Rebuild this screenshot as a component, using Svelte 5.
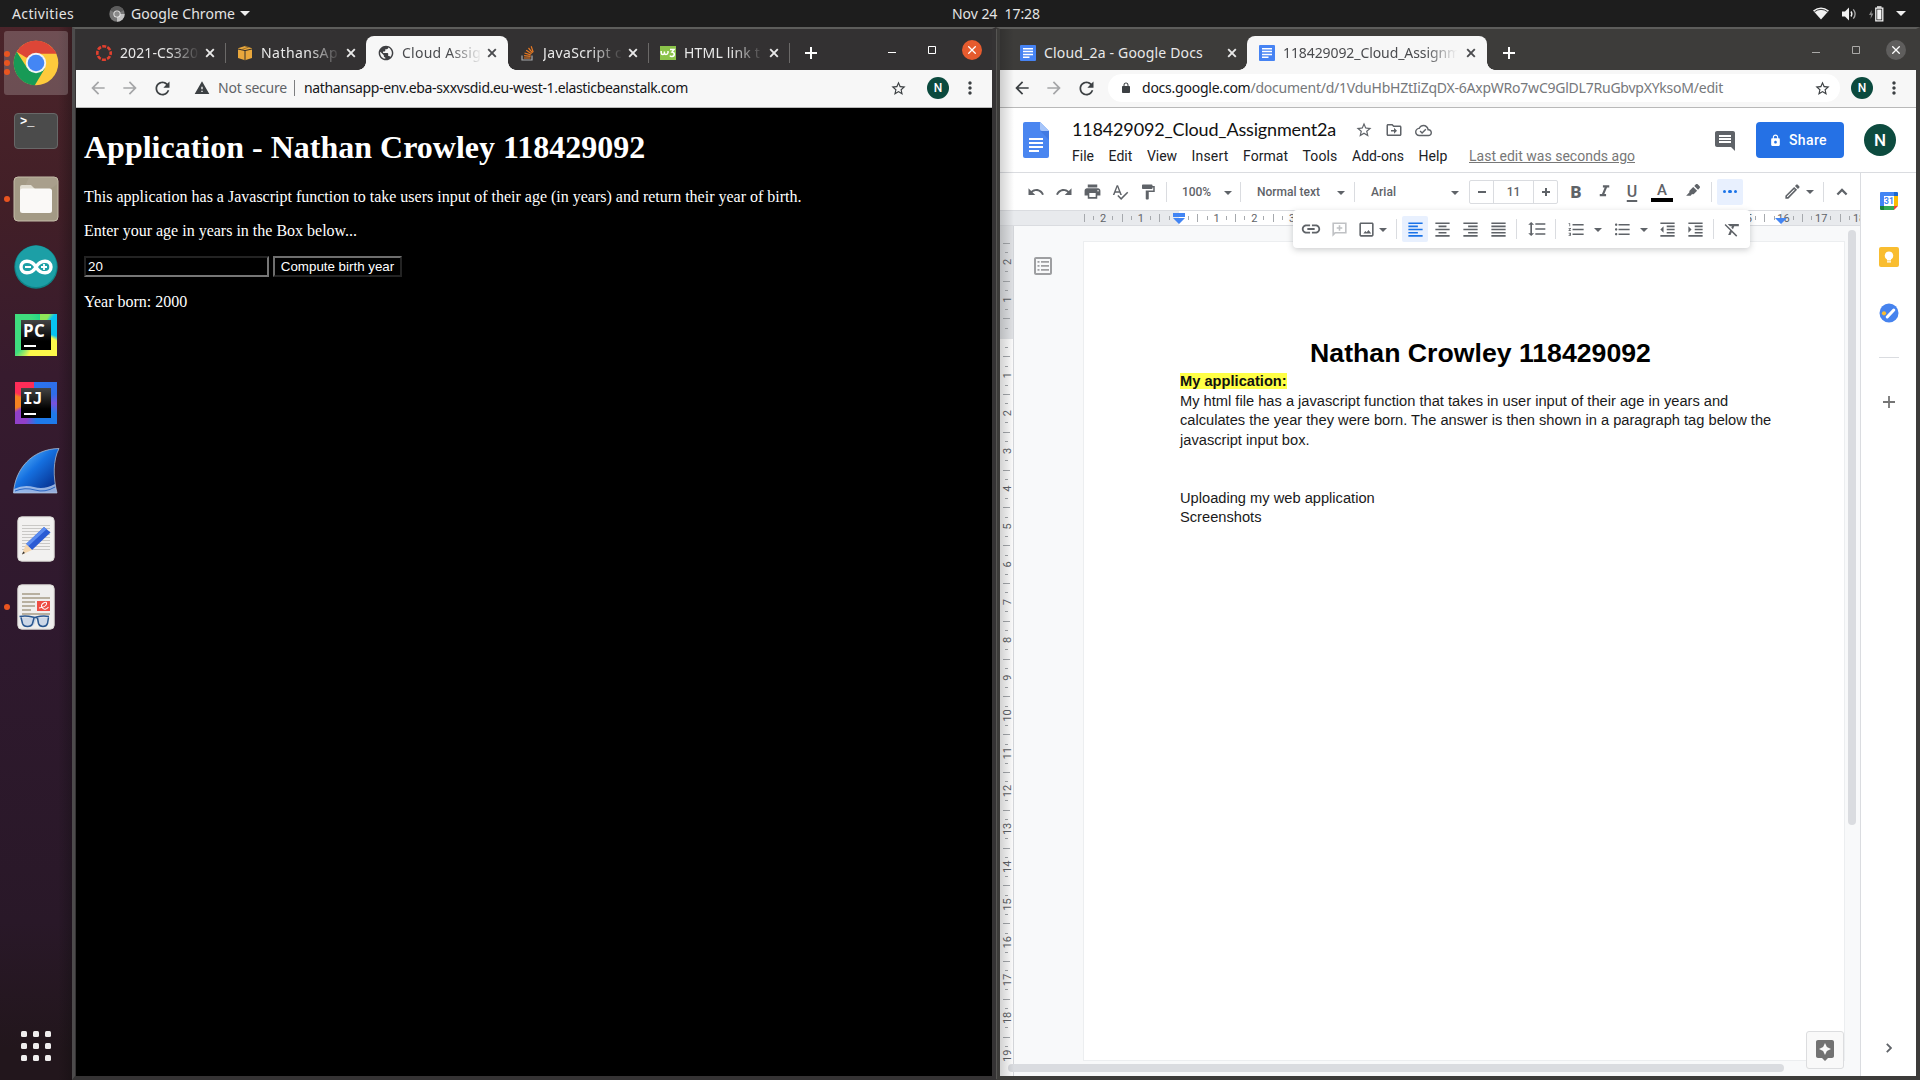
<script>
  const p = {
    back: 'M20 11H7.83l5.59-5.59L12 4l-8 8 8 8 1.41-1.41L7.83 13H20v-2z',
    forward: 'M12 4l-1.41 1.41L16.17 11H4v2h12.17l-5.58 5.59L12 20l8-8z',
    reload: 'M17.65 6.35C16.2 4.9 14.21 4 12 4c-4.42 0-7.99 3.58-7.99 8s3.57 8 7.99 8c3.73 0 6.84-2.55 7.73-6h-2.08c-.82 2.33-3.04 4-5.65 4-3.31 0-6-2.69-6-6s2.69-6 6-6c1.66 0 3.14.69 4.22 1.78L13 11h7V4l-2.35 2.35z',
    warning: 'M1 21h22L12 2 1 21zm12-3h-2v-2h2v2zm0-4h-2v-4h2v4z',
    lock: 'M18 8h-1V6c0-2.76-2.24-5-5-5S7 3.24 7 6v2H6c-1.1 0-2 .9-2 2v10c0 1.1.9 2 2 2h12c1.1 0 2-.9 2-2V10c0-1.1-.9-2-2-2zm-9-2c0-1.66 1.34-3 3-3s3 1.34 3 3v2H9V6z',
    lockHole: 'M18 8h-1V6c0-2.76-2.24-5-5-5S7 3.24 7 6v2H6c-1.1 0-2 .9-2 2v10c0 1.1.9 2 2 2h12c1.1 0 2-.9 2-2V10c0-1.1-.9-2-2-2zm-6 9.5c-1.4 0-2.5-1.1-2.5-2.5s1.1-2.5 2.5-2.5 2.5 1.1 2.5 2.5-1.1 2.5-2.5 2.5zM9 8V6c0-1.66 1.34-3 3-3s3 1.34 3 3v2H9z',
    star: 'M22 9.24l-7.19-.62L12 2 9.19 8.63 2 9.24l5.46 4.73L5.82 21 12 17.27 18.18 21l-1.63-7.03L22 9.24zM12 15.4l-3.76 2.27 1-4.28-3.32-2.88 4.38-.38L12 6.1l1.71 4.04 4.38.38-3.32 2.88 1 4.28L12 15.4z',
    globe: 'M12 2C6.48 2 2 6.48 2 12s4.48 10 10 10 10-4.48 10-10S17.52 2 12 2zm-1 17.93c-3.95-.49-7-3.85-7-7.93 0-.62.08-1.21.21-1.79L9 15v1c0 1.1.9 2 2 2v1.93zm6.9-2.54c-.26-.81-1-1.39-1.9-1.39h-1v-3c0-.55-.45-1-1-1H8v-2h2c.55 0 1-.45 1-1V7h2c1.1 0 2-.9 2-2v-.41c2.93 1.19 5 4.06 5 7.41 0 2.08-.8 3.97-2.1 5.39z',
    move: 'M20 6h-8l-2-2H4c-1.1 0-2 .9-2 2v12c0 1.1.9 2 2 2h16c1.1 0 2-.9 2-2V8c0-1.1-.9-2-2-2zm0 12H4V6h5.17l2 2H20v10zm-8-1l4-4-4-4v3H8v2h4z',
    cloud: 'M19.35 10.04C18.67 6.59 15.64 4 12 4 9.11 4 6.6 5.64 5.35 8.04 2.34 8.36 0 10.91 0 14c0 3.31 2.69 6 6 6h13c2.76 0 5-2.24 5-5 0-2.64-2.05-4.78-4.65-4.96zM19 18H6c-2.21 0-4-1.79-4-4 0-2.05 1.53-3.76 3.56-3.97l1.07-.11.5-.95C8.08 7.14 9.94 6 12 6c2.62 0 4.88 1.86 5.39 4.43l.3 1.5 1.53.11c1.56.1 2.78 1.41 2.78 2.96 0 1.65-1.35 3-3 3zm-9-3.82l-2.09-2.09L6.5 13.5 10 17l6.01-6.01-1.41-1.41z',
    comment: 'M21.99 4c0-1.1-.89-2-1.99-2H4c-1.1 0-2 .9-2 2v12c0 1.1.9 2 2 2h14l4 4-.01-18zM18 14H6v-2h12v2zm0-3H6V9h12v2zm0-3H6V6h12v2z',
    undo: 'M12.5 8c-2.65 0-5.05.99-6.9 2.6L2 7v9h9l-3.62-3.62c1.39-1.16 3.16-1.88 5.12-1.88 3.54 0 6.55 2.31 7.6 5.5l2.37-.78C21.08 11.03 17.15 8 12.5 8z',
    redo: 'M18.4 10.6C16.55 8.99 14.15 8 11.5 8c-4.65 0-8.58 3.03-9.96 7.22L3.9 16c1.05-3.19 4.05-5.5 7.6-5.5 1.95 0 3.73.72 5.12 1.88L13 16h9V7l-3.6 3.6z',
    print: 'M19 8H5c-1.66 0-3 1.34-3 3v6h4v4h12v-4h4v-6c0-1.66-1.34-3-3-3zm-3 11H8v-5h8v5zm3-7c-.55 0-1-.45-1-1s.45-1 1-1 1 .45 1 1-.45 1-1 1zm-1-9H6v4h12V3z',
    spell: 'M12.45 16h2.09L9.43 3H7.57L2.46 16h2.09l1.12-3h5.64l1.14 3zm-6.02-5L8.5 5.48 10.57 11H6.43zm15.16.59l-8.09 8.09L9.83 16l-1.41 1.41 5.09 5.09L23 13l-1.41-1.41z',
    paint: 'M18 4V3c0-.55-.45-1-1-1H5c-.55 0-1 .45-1 1v4c0 .55.45 1 1 1h12c.55 0 1-.45 1-1V6h1v4H9v11c0 .55.45 1 1 1h2c.55 0 1-.45 1-1v-9h8V4h-3z',
    italic: 'M10 4v3h2.21l-3.42 8H6v3h8v-3h-2.21l3.42-8H18V4z',
    marker: 'M13 5.5l5.5 5.5-4.2 4.2c-.8.8-2 .9-2.9.4L9.3 18H3l4.7-4.8c-.4-.9-.3-1.9.4-2.6zM14.5 4.2l2.3-2.3c.7-.7 1.8-.7 2.5 0l2.8 2.8c.7.7.7 1.8 0 2.5l-2.3 2.3z',
    pencil: 'M14.06 9.02l.92.92L5.92 19H5v-.92l9.06-9.06M17.66 3c-.25 0-.51.1-.7.29l-1.83 1.83 3.75 3.75 1.83-1.83c.39-.39.39-1.02 0-1.41l-2.34-2.34c-.2-.2-.45-.29-.71-.29zm-3.6 3.19L3 17.25V21h3.75L17.81 9.94l-3.75-3.75z',
    up: 'M7.41 16L12 11.42 16.59 16 18.5 14.1 12 7.6 5.5 14.1z',
    link: 'M3.9 12c0-1.71 1.39-3.1 3.1-3.1h4V7H7c-2.76 0-5 2.24-5 5s2.24 5 5 5h4v-1.9H7c-1.71 0-3.1-1.39-3.1-3.1zM8 13h8v-2H8v2zm9-6h-4v1.9h4c1.71 0 3.1 1.39 3.1 3.1s-1.39 3.1-3.1 3.1h-4V17h4c2.76 0 5-2.24 5-5s-2.24-5-5-5z',
    addComment: 'M3 3h18v14H7l-4 4zM5 5v11.2L6.2 15H19V5zM11 6.5h2V9h2.5v2H13v2.5h-2V11H8.5V9H11z',
    image: 'M19 5v14H5V5h14m0-2H5c-1.1 0-2 .9-2 2v14c0 1.1.9 2 2 2h14c1.1 0 2-.9 2-2V5c0-1.1-.9-2-2-2zM14.5 12.5l-2.2 2.9L10.5 14 8 17h10z',
    left: 'M15 15H3v2h12v-2zm0-8H3v2h12V7zM3 13h18v-2H3v2zm0 8h18v-2H3v2zM3 3v2h18V3H3z',
    center: 'M7 15v2h10v-2H7zm-4 6h18v-2H3v2zm0-8h18v-2H3v2zm4-6v2h10V7H7zM3 3v2h18V3H3z',
    right: 'M3 21h18v-2H3v2zm6-4h12v-2H9v2zm-6-4h18v-2H3v2zm6-4h12V7H9v2zM3 3v2h18V3H3z',
    justify: 'M3 21h18v-2H3v2zm0-4h18v-2H3v2zm0-4h18v-2H3v2zm0-4h18V7H3v2zm0-6v2h18V3H3z',
    spacing: 'M6 7h2.5L5 3.5 1.5 7H4v10H1.5L5 20.5 8.5 17H6V7zm4-2v2h12V5H10zm0 14h12v-2H10v2zm0-6h12v-2H10v2z',
    numbers: 'M2 17h2v.5H3v1h1v.5H2v1h3v-4H2v1zm1-9h1V4H2v1h1v3zm-1 3h1.8L2 13.1v.9h3v-1H3.2L5 10.9V10H2v1zm5-6v2h14V5H7zm0 14h14v-2H7v2zm0-6h14v-2H7v2z',
    bullets: 'M4 10.5c-.83 0-1.5.67-1.5 1.5s.67 1.5 1.5 1.5 1.5-.67 1.5-1.5-.67-1.5-1.5-1.5zm0-6c-.83 0-1.5.67-1.5 1.5S3.17 7.5 4 7.5 5.5 6.83 5.5 6 4.83 4.5 4 4.5zm0 12c-.83 0-1.5.68-1.5 1.5s.68 1.5 1.5 1.5 1.5-.68 1.5-1.5-.67-1.5-1.5-1.5zM7 19h14v-2H7v2zm0-6h14v-2H7v2zm0-8v2h14V5H7z',
    outdent: 'M11 17h10v-2H11v2zm-8-5l4 4V8l-4 4zm0 9h18v-2H3v2zM3 3v2h18V3H3zm8 6h10V7H11v2zm0 4h10v-2H11v2z',
    indent: 'M3 21h18v-2H3v2zM3 8v8l4-4-4-4zm8 9h10v-2H11v2zM3 3v2h18V3H3zm8 6h10V7H11v2zm0 4h10v-2H11v2z',
    clear: 'M3.27 5L2 6.27l6.97 6.97L6.5 19h3l1.57-3.66L16.73 21 18 19.73 3.55 5.27 3.27 5zM6 5v.18L8.82 8h2.4l-.72 1.68 2.1 2.1L14.21 8H20V5H6z',
    assistant: 'M19 2H5c-1.11 0-2 .9-2 2v14c0 1.1.89 2 2 2h4l3 3 3-3h4c1.1 0 2-.9 2-2V4c0-1.1-.9-2-2-2zm-5.12 10.88L12 17l-1.88-4.12L6 11l4.12-1.88L12 5l1.88 4.12L18 11l-4.12 1.88z',
    dots: 'M12 8c1.1 0 2-.9 2-2s-.9-2-2-2-2 .9-2 2 .9 2 2 2zm0 2c-1.1 0-2 .9-2 2s.9 2 2 2 2-.9 2-2-.9-2-2-2zm0 6c-1.1 0-2 .9-2 2s.9 2 2 2 2-.9 2-2-.9-2-2-2z',
    outline: 'M19 3H5c-1.1 0-2 .9-2 2v14c0 1.1.9 2 2 2h14c1.1 0 2-.9 2-2V5c0-1.1-.9-2-2-2zm0 16H5V5h14zM6.5 7h2v1.8h-2zM10 7h8v1.8h-8zM6.5 11h2v1.8h-2zM10 11h8v1.8h-8zM6.5 15h2v1.8h-2zM10 15h8v1.8h-8z'
  };

  const tabs = [
    { title: '2021-CS320', icon: 'canvas', w: 78 },
    { title: 'NathansAp', icon: 'aws', w: 77 },
    { title: 'Cloud Assig', icon: 'globe', w: 79, active: true },
    { title: 'JavaScript c', icon: 'stack', w: 79 },
    { title: 'HTML link t', icon: 'w3', w: 76 }
  ];
  const docTabs = [
    { title: 'Cloud_2a - Google Docs', icon: 'docs', w: 159 },
    { title: '118429092_Cloud_Assignm', icon: 'docs', w: 177, active: true }
  ];
  const menus = [['File', 22], ['Edit', 24], ['View', 30], ['Insert', 37], ['Format', 45], ['Tools', 35], ['Add-ons', 52], ['Help', 29]];
  const dock = ['chrome', 'terminal', 'files', 'arduino', 'pycharm', 'idea', 'wireshark', 'editor', 'viewer'];
  const running = { chrome: 3, files: 1, viewer: 1 };

  const CM = 37.8;
  const range = (a, b) => Array.from({ length: b - a + 1 }, (_, i) => a + i);
  // Quarter-centimetre marks, leaving out the places where a number stands
  const marks = (a, b) => range(a * 4, b * 4).filter((q) => q % 4 !== 0);
  const hMarks = marks(-3, 18).filter((q) => q >= -10);
  const vMarks = marks(-3, 19).filter((q) => q >= -10);

  // Spreads the letters so that a run of text takes exactly w pixels
  function fit(node, w) {
    const now = node.getBoundingClientRect().width;
    node.style.letterSpacing = (w - now) / node.textContent.length + 'px';
  }
</script>

{#snippet ic(name, size = 18)}
  <svg class="ic" width={size} height={size} viewBox="0 0 24 24" fill="currentColor" fill-rule="evenodd"><path d={p[name]} /></svg>
{/snippet}

{#snippet caret()}
  <svg class="ic" width="8" height="4" viewBox="0 0 8 4" fill="currentColor"><path d="M0 0h8L4 4z" /></svg>
{/snippet}

{#snippet favicon(name)}
  <svg class="ic" width="16" height="16" viewBox="0 0 16 16">
    {#if name === 'canvas'}
      <circle cx="8" cy="8" r="6.7" fill="none" stroke="#e2402f" stroke-width="2.6" stroke-dasharray="4 1.262" stroke-dashoffset="2" />
    {:else if name === 'aws'}
      <path d="M1 3.2L8 1l7 2.2v9.8L8 15.2 1 13z" fill="#e9a73c" />
      <path d="M1 4l7 1.6L15 4M8 5.6V15" fill="none" stroke="#35302b" stroke-width="1" />
      <path d="M8 1l3.5 1.2L4.5 4.6" fill="none" stroke="#7a5a25" stroke-width=".7" />
    {:else if name === 'globe'}
      <g transform="scale(.6667)"><path d={p.globe} transform="translate(-1.2 -1.2) scale(1.1)" fill="#3f4043" fill-rule="evenodd" /></g>
    {:else if name === 'stack'}
      <path d="M3 10.5v4.5h10v-4.5" fill="none" stroke="#a7a9ac" stroke-width="1.2" />
      <path d="M5 13h6.5M5.1 10.7l6.5.7M5.5 8l6.2 1.9M7.2 5.3l5.4 3.5M9.5 3l4 4.9M12.2 1.3l2 6" stroke="#e87922" stroke-width="1.2" />
    {:else if name === 'w3'}
      <rect y="1" width="16" height="14" fill="#8bc34a" />
      <path d="M1.2 6v1.700q0 1.800 1.600 1.800T4.400 7.700V6.500M4.400 7.700q0 1.800 1.600 1.800T8 7.700V6M10 4.500h4l-2 2.500q2.300.2 2.300 2.300T12 11.600q-1.500 0-2.200-1" fill="none" stroke="#fff" stroke-width="1.5" />
    {:else}
      <rect width="16" height="16" rx="1" fill="#4683f3" />
      <path d="M3 3.800h10M3 6.600h10M3 9.400h10M3 12.200h6.500" stroke="#fff" stroke-width="1.5" />
    {/if}
  </svg>
{/snippet}

{#snippet strip(list, cls)}
  <div class="strip {cls}">
    {#each list as t}
      <div class="tab" class:active={t.active}>
        {@render favicon(t.icon)}
        <div class="ttl"><span use:fit={t.w}>{t.title}</span></div>
        <svg class="x" width="10" height="10" viewBox="0 0 10 10" stroke="currentColor" stroke-width="1.9"><path d="M1.2 1.2l7.6 7.6M8.8 1.2L1.2 8.8" /></svg>
      </div>
    {/each}
    <svg class="plus" width="12" height="12" viewBox="0 0 12 12" stroke="#fff" stroke-width="2"><path d="M6 0v12M0 6h12" /></svg>
    <div class="controls">
      <svg width="8" height="8" viewBox="0 0 8 8" stroke="currentColor"><path d="M0 6.5h8" /></svg>
      <svg width="8" height="8" viewBox="0 0 8 8" stroke="currentColor" fill="none"><path d="M.5.5h7v7h-7z" /></svg>
      <span class="close"><svg width="8" height="8" viewBox="0 0 8 8" stroke="#fff" stroke-width="1.3"><path d="M.3.3l7.4 7.4M7.7.3L.3 7.7" /></svg></span>
    </div>
  </div>
{/snippet}

<div class="desktop">
  <header class="topbar">
    <span class="activities" use:fit={62}>Activities</span>
    <svg width="16" height="16" viewBox="0 0 16 16"><circle cx="8" cy="8" r="7.7" fill="#777" /><path d="M8 8L1.3 4.2A7.7 7.7 0 0 1 14.7 4.2z" fill="#5c5c5c" /><path d="M8 8h7.7A7.7 7.7 0 0 1 8 15.7z" fill="#c2c2c2" /><circle cx="8" cy="8" r="3.6" fill="#eee" /><circle cx="8" cy="8" r="2.7" fill="#8a8a8a" /></svg>
    <span class="appname" use:fit={104}>Google Chrome</span>
    <svg width="10" height="5" viewBox="0 0 10 5"><path d="M0 0h10L5 5z" fill="#eee" /></svg>
    <span class="clock" use:fit={88}>Nov 24&nbsp; 17:28</span>
    <div class="tray">
      <svg width="16" height="13" viewBox="0 0 16 13"><path d="M8 12.5L0 3.5Q8-2.5 16 3.5z" fill="#f2f2f2" /><path d="M1.5 4.7Q8 0 14.5 4.7" fill="none" stroke="#1d1d1d" stroke-width=".9" /></svg>
      <svg width="15" height="14" viewBox="0 0 15 14"><path d="M0 4.5h3L7 .5v13l-4-4H0z" fill="#f2f2f2" /><path d="M9 4.5q1.7 2.5 0 5" stroke="#f2f2f2" stroke-width="1.4" fill="none" /><path d="M11.3 2.3q3.6 4.7 0 9.4" stroke="#aaa" stroke-width="1.3" fill="none" /></svg>
      <svg width="15" height="16" viewBox="0 0 15 16"><path d="M2.8 4L0 9h2l-.5 4L4.400 7.500H2.500z" fill="#8a8a8a" /><path d="M6.800 2.200h7v12.600h-7z" fill="none" stroke="#f2f2f2" stroke-width="1.3" /><path d="M8 .3h4.500v1.500H8zM8.200 3.600h4.200v9.800H8.200z" fill="#f2f2f2" /></svg>
      <svg width="10" height="5" viewBox="0 0 10 5"><path d="M0 0h10L5 5z" fill="#eee" /></svg>
    </div>
  </header>

  <main class="work">
    <nav class="dock">
      {#each dock as d}
        <div class="slot" class:on={d === 'chrome'}>
          {#if running[d]}
            <div class="pips">{#each range(1, running[d]) as _}<i></i>{/each}</div>
          {/if}
          {#if d === 'chrome'}
            <svg width="46" height="46" viewBox="-23 -23 46 46">
              <circle r="22.3" fill="#fdca3c" />
              <path d="M-19.3-11.2A22.3 22.3 0 0 1 20.3-9.4H0L-9.5-5.2z" fill="#dd4637" />
              <path d="M-19.3-11.2A22.3 22.3 0 0 0-1.2 22.3L9 5.3 0 9-9 4.7z" fill="#179a56" />
              <path d="M0-9.4h20.3L19-12z" fill="#dd4637" />
              <circle r="10.2" fill="#f2f4f5" /><circle r="8.3" fill="#4486f4" />
            </svg>
          {:else if d === 'terminal'}
            <div class="terminal"><span>&gt;_</span></div>
          {:else if d === 'files'}
            <svg width="46" height="46" viewBox="0 0 46 46"><rect x="1" y="1" width="44" height="44" rx="4" fill="#a39a85" stroke="#c5bda9" /><path d="M16 1.5h25q3.5 0 3.5 3.5v3L13 30V8z" fill="#b1a895" opacity=".4" /><path d="M7 11q0-2 2-2h9l4 4h9v8H7z" fill="#e2ded2" /><rect x="7" y="12.5" width="32" height="24.5" rx="2.5" fill="#faf9f7" /></svg>
          {:else if d === 'arduino'}
            <svg width="44" height="44" viewBox="0 0 44 44"><circle cx="22" cy="22" r="21.7" fill="#0e8487" /><circle cx="22" cy="21.3" r="20.7" fill="#1c9fa6" /><path d="M22 22C17.5 14 7 14.5 7 22s10.5 8 15 0c4.5-8 15-7.5 15 0s-10.5 8-15 0z" fill="none" stroke="#fff" stroke-width="3.4" /><path d="M11 22h6M27 22h6M30 19v6" stroke="#fff" stroke-width="1.8" /></svg>
          {:else if d === 'pycharm' || d === 'idea'}
            <div class="ide {d}"><div><span>{d === 'pycharm' ? 'PC' : 'IJ'}</span><i></i></div></div>
          {:else if d === 'wireshark'}
            <svg width="48" height="48" viewBox="0 0 48 48"><defs><linearGradient id="fin" x1="0" y1="0" x2="1" y2="1"><stop offset=".15" stop-color="#58b2fa" /><stop offset=".45" stop-color="#1570e0" /><stop offset=".9" stop-color="#052c8a" /></linearGradient></defs><path d="M1.5 46C3 22 20 2 47 1.5 41 13 41 30 45 46z" fill="url(#fin)" stroke="#a9b7cc" stroke-width=".8" /><path d="M2 42q10-5 20-2t21-3l2 9H1.5z" fill="#b6cdf0" opacity=".8" /><path d="M3 44q10-4 20-1t20-3" stroke="#2a66c4" fill="none" /></svg>
          {:else if d === 'editor'}
            <svg width="38" height="46" viewBox="0 0 38 46"><rect x=".8" y=".8" width="36.4" height="44.4" rx="4" fill="#f2f1f0" stroke="#d4d2cf" /><path d="M5 9.5h28M5 12.5h28M5 15.5h28M5 18.5h28M5 21.5h28M5 24.5h28M5 27.5h28M5 30.5h28M5 33.5h28" stroke="#c9c8c6" /><path d="M27 11l6.5 5.5L15 34l-6-6z" fill="#2a5bd4" /><path d="M27 11l2.5 2.2L11.5 30 9 28z" fill="#5b8cf0" /><path d="M9 28l6 6-10 4.5z" fill="#f4d6ae" /><path d="M6.3 35.5L8 37l-3 1.5z" fill="#333" /></svg>
          {:else}
            <svg width="38" height="46" viewBox="0 0 38 46"><rect x=".8" y=".8" width="36.4" height="44.4" rx="4" fill="#efeeed" stroke="#d4d2cf" /><path d="M5 10h18M5 14h28M5 18h13M5 22h13M5 26h9M5 30h28" stroke="#b8b0a0" stroke-width="1.8" /><rect x="20" y="17" width="13" height="10" fill="#ee4d43" /><path d="M22 24q7-1 7.5-4t-3-1-1 5 6-1" fill="none" stroke="#fff" stroke-width="1.1" /><path d="M3.5 33.5h12l2 1.5h3l2-1.5H32l-1.5 6q-1 3-4.5 3t-4.5-3L19.5 35l-2 5q-1 2.5-5 2.5T6 40z" fill="#b4c8e2" opacity=".6" /><path d="M2.5 32.5q7-1 13 .5t4 0q6-1.500 12.500-.5M4 33.500l1.500 6q1 3 5 3t5-3l1.500-5.500M20.500 34l1 5.500q1 3 4.500 3t4.500-3l1-6" fill="none" stroke="#28568f" stroke-width="1.5" /></svg>
          {/if}
        </div>
      {/each}
      <div class="apps">{#each range(1, 9) as _}<i></i>{/each}</div>
    </nav>

    <section class="win one">
      {@render strip(tabs, 'dark')}
      <div class="bar">
        <span class="nav off">{@render ic('back', 20)}</span>
        <span class="nav off">{@render ic('forward', 20)}</span>
        <span class="nav">{@render ic('reload', 21)}</span>
        <div class="omni">
          {@render ic('warning', 16)}
          <span class="secure" use:fit={69}>Not secure</span>
          <i class="split"></i>
          <span class="host" use:fit={384}>nathansapp-env.eba-sxxvsdid.eu-west-1.elasticbeanstalk.com</span>
          <span class="fav">{@render ic('star', 17)}</span>
        </div>
        <span class="me">N</span>
        <span class="kebab">{@render ic('dots', 20)}</span>
      </div>
      <div class="page">
        <h1>Application - Nathan Crowley 118429092</h1>
        <p>This application has a Javascript function to take users input of their age (in years) and return their year of birth.</p>
        <p>Enter your age in years in the Box below...</p>
        <div class="form"><div class="field">20</div><div class="btn">Compute birth year</div></div>
        <p>Year born: 2000</p>
      </div>
    </section>

    <section class="win two">
      {@render strip(docTabs, 'wide')}
      <div class="bar">
        <span class="nav">{@render ic('back', 20)}</span>
        <span class="nav off">{@render ic('forward', 20)}</span>
        <span class="nav">{@render ic('reload', 21)}</span>
        <div class="omni pill">
          {@render ic('lock', 12)}
          <span class="host" use:fit={581}>docs.google.com<em>/document/d/1VduHbHZtIiZqDX-6AxpWRo7wC9GlDL7RuGbvpXYksoM/edit</em></span>
          <span class="fav">{@render ic('star', 17)}</span>
        </div>
        <span class="me">N</span>
        <span class="kebab">{@render ic('dots', 20)}</span>
      </div>

      <div class="docs">
        <div class="head">
          <svg class="logo" width="26" height="36" viewBox="0 0 26 36"><path d="M2 0h15l9 9v25q0 2-2 2H2q-2 0-2-2V2Q0 0 2 0z" fill="#4a86f0" /><path d="M17 0l9 9h-7q-2 0-2-2z" fill="#a6c5fa" /><path d="M17.5 9H26v9z" fill="#3c73d8" opacity=".6" /><path d="M6 17h14M6 21h14M6 25h14M6 29h10" stroke="#fff" stroke-width="1.9" /></svg>
          <div class="meta">
            <div class="name"><span class="docname" use:fit={264}>118429092_Cloud_Assignment2a</span>{@render ic('star', 18)}{@render ic('move', 18)}{@render ic('cloud', 17)}</div>
            <div class="menus">
              {#each menus as [m, w]}<span use:fit={w}>{m}</span>{/each}
              <span class="last" use:fit={166}>Last edit was seconds ago</span>
            </div>
          </div>
          <span class="talk">{@render ic('comment', 24)}</span>
          <div class="share">{@render ic('lockHole', 13)}<span use:fit={38}>Share</span></div>
          <span class="avatar">N</span>
        </div>

        <div class="body">
          <div class="main">
            <div class="tools">
              <span class="t">{@render ic('undo')}</span><span class="t">{@render ic('redo')}</span><span class="t">{@render ic('print', 19)}</span><span class="t">{@render ic('spell')}</span><span class="t">{@render ic('paint')}</span>
              <i class="sep first"></i>
              <span class="dd zoom"><span use:fit={29}>100%</span>{@render caret()}</span>
              <i class="sep"></i>
              <span class="dd style"><span use:fit={63}>Normal text</span>{@render caret()}</span>
              <i class="sep"></i>
              <span class="dd font"><span use:fit={25}>Arial</span>{@render caret()}</span>
              <div class="size">
                <span><svg width="8" height="8" viewBox="0 0 8 8" stroke="currentColor" stroke-width="2"><path d="M0 4h8" /></svg></span>
                <b>11</b>
                <span><svg width="8" height="8" viewBox="0 0 8 8" stroke="currentColor" stroke-width="2"><path d="M0 4h8M4 0v8" /></svg></span>
              </div>
              <span class="t bold">B</span>
              <span class="t">{@render ic('italic', 19)}</span>
              <span class="t under">U</span>
              <span class="t colour"><b>A</b><i></i></span>
              <span class="t hl">{@render ic('marker', 17)}</span>
              <i class="sep more-sep"></i>
              <span class="more"><i></i><i></i><i></i></span>
              <span class="t mode">{@render ic('pencil', 19)}</span>
              {@render caret()}
              <i class="sep mode-sep"></i>
              <span class="chev">{@render ic('up', 20)}</span>
            </div>

            <svg class="hruler" width="860" height="14" viewBox="0 0 860 14">
              <rect width="179" height="14" fill="#e8eaed" /><rect x="781" width="79" height="14" fill="#e8eaed" />
              {#each hMarks as q}<rect x={Math.round(178.3 + (q * CM) / 4)} y={q % 2 === 0 ? 3 : 5} width="1" height={q % 2 === 0 ? 8 : 4} fill="#a6a9ad" />{/each}
              {#each range(-2, 18).filter((n) => n) as n}<text x={178.7 + n * CM} y="10.5" text-anchor="middle">{Math.abs(n)}</text>{/each}
              <path d="M173 2h12v4h-12zM173 7h12l-6 6zM775 7h12l-6 6z" fill="#4285f4" />
            </svg>

            <div class="canvas">
              <svg class="vruler" width="13" height="850" viewBox="0 0 13 850">
                <rect width="13" height="113" fill="#e1e3e6" />
                {#each vMarks as q}<rect x={q % 2 === 0 ? 3 : 5} y={Math.round(111.3 + (q * CM) / 4)} width={q % 2 === 0 ? 7 : 3} height="1" fill="#a6a9ad" />{/each}
                {#each range(-2, 19).filter((n) => n) as n}<text transform="translate(11 {111.5 + n * CM}) rotate(-90)" text-anchor="middle">{Math.abs(n)}</text>{/each}
              </svg>
              <span class="outline">{@render ic('outline', 24)}</span>
              <article class="paper">
                <h2>Nathan Crowley 118429092</h2>
                <p><mark>My application:</mark></p>
                <p>My html file has a javascript function that takes in user input of their age in years and<br />calculates the year they were born. The answer is then shown in a paragraph tag below the<br />javascript input box.</p>
                <p class="later">Uploading my web application<br />Screenshots</p>
              </article>
              <i class="vbar"></i>
              <i class="hbar"></i>
              <span class="explore">{@render ic('assistant', 24)}</span>
            </div>
          </div>

          <aside>
            <svg width="20" height="20" viewBox="0 0 20 20"><path d="M2 1h13v4H5v10H1V2q0-1 1-1z" fill="#4285f4" /><path d="M15 1h3q1 0 1 1v3h-4z" fill="#1967d2" /><path d="M15 5h4v10h-4z" fill="#fbbc04" /><path d="M1 15h4v4H2q-1 0-1-1z" fill="#188038" /><path d="M5 15h10v4H5z" fill="#34a853" /><path d="M15 15h4l-4 4z" fill="#ea4335" /><path d="M5 5h10v10H5z" fill="#fff" /><text x="10" y="13" text-anchor="middle" class="cal">31</text></svg>
            <svg width="20" height="20" viewBox="0 0 20 20"><rect width="20" height="20" rx="2" fill="#f9bd30" /><path d="M10 4.5a4.2 4.2 0 0 1 2 7.9v1H8v-1a4.2 4.2 0 0 1 2-7.9zM8 14.3h4v1.2H8z" fill="#fff" /></svg>
            <svg width="20" height="20" viewBox="0 0 20 20"><circle cx="10" cy="10" r="9.5" fill="#4683ee" /><path d="M8.2 14L14.8 7" stroke="#fff" stroke-width="3" stroke-linecap="round" /><circle cx="5" cy="10.3" r="2.1" fill="#f9bd30" /></svg>
            <hr />
            <svg class="add" width="12" height="12" viewBox="0 0 12 12" stroke="#757575" stroke-width="1.8"><path d="M6 0v12M0 6h12" /></svg>
            <svg class="hide" width="6" height="10" viewBox="0 0 6 10" fill="none" stroke="#5f6368" stroke-width="1.8"><path d="M.8.8L5 5 .8 9.2" /></svg>
          </aside>

          <div class="float">
            <span class="t">{@render ic('link', 22)}</span><span class="t dim">{@render ic('addComment', 19)}</span><span class="t pic">{@render ic('image', 19)}</span>{@render caret()}
            <i class="sep a"></i>
            <span class="t sel">{@render ic('left', 19)}</span><span class="t">{@render ic('center', 19)}</span><span class="t">{@render ic('right', 19)}</span><span class="t">{@render ic('justify', 19)}</span>
            <i class="sep b"></i>
            <span class="t sp">{@render ic('spacing', 20)}</span>
            <i class="sep c"></i>
            <span class="t n">{@render ic('numbers', 19)}</span>{@render caret()}
            <span class="t u">{@render ic('bullets', 19)}</span>{@render caret()}
            <span class="t o">{@render ic('outdent', 19)}</span><span class="t">{@render ic('indent', 19)}</span>
            <i class="sep d"></i>
            <span class="t e">{@render ic('clear', 19)}</span>
          </div>
        </div>
      </div>
      <i class="shade"></i>
    </section>
  </main>
</div>

<style>
  :global(body) { background: #1d1d1d; overflow: hidden; }
  * { box-sizing: border-box; }
  svg { display: block; flex: none; }
  span, i, b { flex: none; white-space: nowrap; font-style: normal; }
  .desktop { width: 1920px; height: 1080px; display: flex; flex-direction: column; font-family: 'Noto Sans', sans-serif; overflow: hidden; }

  .topbar { position: relative; height: 27px; background: #1d1d1d; color: #e4e4e4; font-size: 14px; line-height: 26px; display: flex; align-items: center; padding: 0 14px 0 12px; }
  .activities { margin-right: 35px; }
  .appname { margin: 0 5px 0 6px; }
  .clock { margin-left: 702px; }
  .tray { margin-left: auto; display: flex; align-items: center; gap: 12px; }
  .tray svg:nth-child(2) { margin-left: 1px; }

  .work { flex: 1; display: flex; min-height: 0; }
  .dock { width: 72px; padding: 4px; display: flex; flex-direction: column; gap: 4px; background: linear-gradient(90deg, transparent 58px, rgba(10, 10, 10, .3)), linear-gradient(#4b242a 0, #421f27 17%, #371b2e 33%, #2f192e 55%, #291828 85%, #22161c 97%); }
  .slot { position: relative; width: 64px; height: 64px; display: flex; align-items: center; justify-content: center; border-radius: 3px; }
  .slot.on { background: rgba(255, 255, 255, .2); }
  .pips { position: absolute; left: 0; top: 0; height: 64px; display: flex; flex-direction: column; justify-content: center; gap: 3px; }
  .pips i { width: 6px; height: 6px; border-radius: 50%; background: #e95420; }
  .terminal { width: 44px; height: 36px; border-radius: 4px; background: #4b4b4b; border: 1px solid #686868; padding: 1px 5px; color: #fff; font: bold 12px/14px 'Liberation Mono', monospace; }
  .ide { width: 42px; height: 42px; padding: 6px; }
  .ide > div { width: 30px; height: 30px; background: linear-gradient(#444, #000 70%); padding: 1px 2px; }
  .ide span { display: block; color: #fff; font: bold 17px/19px 'Open Sans', sans-serif; letter-spacing: .3px; }
  .ide i { display: block; width: 12px; height: 2px; background: #fff; margin: 5px 0 0 1px; }
  .pycharm { background: conic-gradient(from 0deg at 60% 40%, #8fe558 0 8%, #07c3f2 12% 30%, #fcf84a 34% 57%, #3fdc7e 63% 90%, #21d789 100%); }
  .idea { background: conic-gradient(from 0deg at 45% 45%, #2b73ef 0 6%, #2f6de8 20%, #7a51dd 27%, #1e7aea 34% 48%, #9140c8 56% 66%, #f58220 69% 79%, #fe2d58 82% 100%); }
  .idea span { font-family: 'DejaVu Sans Mono', monospace; font-size: 16px; letter-spacing: 0; }
  .apps { margin: auto auto 15px 17px; display: grid; grid-template-columns: repeat(3, 6px); gap: 6px; }
  .apps i { width: 6px; height: 6px; border-radius: 1.5px; background: #f0eeee; }

  .win { position: relative; display: flex; flex-direction: column; }
  .one { width: 924px; border: solid #353334; border-width: 2px 4px 4px 3px; border-top-color: #5d5d5b; border-left-color: #4d4b4c; padding-left: 1px; background: #353334; }
  .two { width: 924px; border: solid #3d3c3a; border-width: 2px 4px 4px; border-top-color: #5d5d5b; background: #3d3c3a; }
  .two::before { content: ''; position: absolute; left: -4px; top: 0; width: 1px; height: 1050px; background: #565553; }

  .strip { height: 41px; display: flex; align-items: flex-end; padding-left: 8px; color: #e9e9e9; font-size: 14px; }
  .strip.dark { background: #333132; }
  .tab { position: relative; height: 34px; width: 141px; display: flex; align-items: center; padding: 0 0 1px 12px; }
  .tab.active { width: 142px; }
  .dark .tab:nth-child(4) { width: 140px; padding-left: 11px; }
  .wide .tab { width: 240px; }
  .wide .tab:first-child { width: 239px; }
  .tab:not(.active)::after { content: ''; position: absolute; right: -1px; top: 7px; width: 1px; height: 20px; background: #6b6968; }
  .tab:has(+ .active)::after { display: none; }
  .tab.active { background: #f7f7f7; color: #4b4c4f; border-radius: 8px 8px 0 0; }
  .tab.active::before, .tab.active::after { content: ''; position: absolute; bottom: 0; width: 8px; height: 8px; }
  .tab.active::before { left: -8px; background: radial-gradient(circle at 0 0, transparent 7.5px, #f7f7f7 8px); }
  .tab.active::after { right: -8px; background: radial-gradient(circle at 100% 0, transparent 7.5px, #f7f7f7 8px); }
  .ttl { width: 80px; margin-left: 8px; overflow: hidden; line-height: 22px; mask-image: linear-gradient(90deg, #000 60%, transparent 100%); }
  .wide .ttl { width: 178px; mask-image: linear-gradient(90deg, #000 80%, transparent 98%); }
  .wide .tab:first-child .ttl { width: 172px; mask-image: none; }
  .ttl span { display: inline-block; }
  .x { margin: 1px 0 0 5px; }
  .wide .x { margin-left: 5px; }
  .wide .tab:first-child .x { margin-left: 11px; }
  .plus { margin: 0 0 11px 16px; }
  .controls { margin: 0 10px 10px auto; display: flex; align-items: center; gap: 32px; color: #fff; }
  .controls .close { margin-left: -6px; width: 20px; height: 20px; border-radius: 50%; background: #e65b2e; display: flex; align-items: center; justify-content: center; }
  .wide .controls { color: #aaa9a7; }
  .wide .close { background: #5f5e5d; }

  .bar { height: 38px; background: #f7f7f7; border-bottom: 1px solid #b9b9b9; display: flex; align-items: center; padding: 0 12px 1px 6px; color: #3c4043; font-size: 14px; }
  .nav { width: 32px; display: flex; justify-content: center; }
  .off { color: #a5a6a8; }
  .omni { width: 732px; height: 28px; margin-left: 6px; border-radius: 14px; padding: 0 9px 0 10px; display: flex; align-items: center; line-height: 26px; }
  .omni > svg { margin-right: 8px; }
  .pill { background: #fff; padding-left: 12px; }
  .pill > svg { margin-right: 10px; }
  .secure { color: #5f6368; }
  .split { width: 1px; height: 16px; background: #7d7e80; margin: 0 9px 0 7px; }
  .host { color: #141517; }
  .host em { color: #76787b; font-style: normal; }
  .fav { margin-left: auto; }
  .me { margin-left: 11px; width: 22px; height: 22px; border-radius: 50%; background: #0b4a3e; color: #fff; font: 500 12px/22px Roboto, sans-serif; text-align: center; }
  .kebab { margin-left: auto; }

  .page { flex: 1; background: #000; color: #fff; padding: 0 8px; font: 16px/18px 'Liberation Serif', serif; overflow: hidden; }
  h1 { margin: 21.44px 0 23px; font-size: 32px; line-height: 36px; }
  .page p { margin: 16px 0; height: 18px; white-space: nowrap; }
  .form { display: flex; gap: 4px; font: 13.333px/17px 'Liberation Sans', sans-serif; }
  .field { width: 185px; height: 21px; border: 2px solid; border-color: #232323 #767676 #767676 #232323; padding: 0 2px; }
  .btn { width: 129px; height: 21px; border: 2px solid; border-color: #6e6e6e #232323 #232323 #6e6e6e; text-align: center; white-space: nowrap; }

  .docs { flex: 1; display: flex; flex-direction: column; background: #fff; min-height: 0; font-family: Roboto, sans-serif; }
  .head { height: 65px; border-bottom: 1px solid #dadce0; display: flex; padding-left: 23px; }
  .logo { margin-top: 14px; }
  .meta { width: 646px; margin-left: 23px; padding-top: 9px; }
  .name { height: 26px; display: flex; align-items: center; color: #5f6368; }
  .name svg { margin-left: 11px; }
  .name svg:nth-of-type(n + 2) { margin-left: 12px; }
  .name .docname { font: 18px/26px Lato, sans-serif; color: #111; margin: -2px 8px 0 0; }
  .menus { display: flex; gap: 14.5px; font-size: 14px; line-height: 26px; color: #202124; }
  .last { margin-left: 7px; color: #777; text-decoration: underline; }
  .talk { margin: 21px 0 0 -5px; color: #5f6368; }
  .share { width: 88px; height: 36px; margin: 14px 0 0 19px; border-radius: 4px; background: #2571e5; color: #fff; display: flex; align-items: center; font: 500 14px/36px Roboto, sans-serif; padding-left: 13px; gap: 7px; }
  .avatar { width: 32px; height: 32px; margin: 16px 0 0 20px; border-radius: 50%; background: #0d4b3f; color: #fff; font: 500 17px/33px Roboto, sans-serif; text-align: center; }

  .body { position: relative; flex: 1; display: flex; min-height: 0; }
  .main { width: 860px; display: flex; flex-direction: column; }
  .tools { height: 39px; border-bottom: 1px solid #dadce0; display: flex; align-items: center; padding-left: 22px; color: #5f6368; font-size: 12px; font-weight: 500; }
  .t { width: 28px; display: flex; justify-content: center; align-items: center; }
  .sep { width: 1px; height: 20px; background: #dadce0; }
  .first { margin-left: 4px; }
  .dd { display: flex; align-items: center; justify-content: space-between; padding: 0 9px 0 15px; }
  .dd svg { margin-top: 2px; }
  .zoom { width: 73px; padding-right: 8px; }
  .style { width: 113px; padding: 0 9px 0 16px; }
  .font { width: 105px; padding: 0 1px 0 16px; }
  .size { width: 89px; height: 24px; margin: 0 4px 0 9px; border: 1px solid #dadce0; border-radius: 2px; display: flex; line-height: 22px; }
  .size span { flex: 1; display: flex; align-items: center; justify-content: center; }
  .size b { width: 41px; text-align: center; border: solid #dadce0; border-width: 0 1px; font-weight: 500; }
  .bold { font: 900 17px/20px Roboto, sans-serif; }
  .under { font: 500 16px/14px Roboto, sans-serif; text-decoration: underline; text-decoration-thickness: 2px; text-underline-offset: 3px; }
  .colour { width: 30px; flex-direction: column; margin-left: 1px; }
  .colour b { font: 500 15px/16px Roboto, sans-serif; margin-top: 1px; }
  .colour i { width: 22px; height: 4px; background: #000; }
  .hl { margin: 0 3px 0 2px; width: 26px; }
  .more-sep { margin-left: 3px; margin-right: 5px; }
  .more { width: 26px; height: 26px; border-radius: 2px; background: #e8f0fe; display: flex; align-items: center; justify-content: center; gap: 2px; margin-right: 35px; }
  .more i { width: 3.5px; height: 3.5px; border-radius: 50%; background: #1a73e8; }
  .mode-sep { margin-left: 9px; }
  .chev { margin-left: 8px; }

  .hruler text, .vruler text { font: 11px Roboto, sans-serif; fill: #5f6368; }
  .canvas { position: relative; height: 851px; background: #f8f9fa; border-top: 1px solid #dadce0; display: flex; }
  .vruler { background: #fdfdfd; box-shadow: 1px 0 #d4d6da; }
  .outline { margin: 28px 0 0 18px; color: #9e9fa1; }
  .paper { width: 760px; height: 818px; margin: 16px 0 0 29px; background: #fff; box-shadow: 0 0 0 1px #eceef0; font: 14.667px/19.4px 'Liberation Sans', sans-serif; color: #1a1a1a; padding: 94px 63px 0 96px; white-space: nowrap; overflow: hidden; }
  .paper h2 { margin: 0 0 1px; text-align: center; font-size: 26.667px; line-height: 35.3px; color: #000; }
  .paper p { margin: 0; }
  .paper .later { margin-top: 38.8px; }
  mark { background: #ffff46; font-weight: bold; color: #111; }
  .vbar { width: 8px; height: 595px; margin: 4px 0 0 4px; border-radius: 4px; background: #dadce0; }
  .hbar { position: absolute; left: 8px; top: 838px; width: 776px; height: 8px; border-radius: 4px; background: #dadce0; }
  .explore { position: absolute; left: 806px; top: 805px; width: 38px; height: 38px; border: 1px solid #dcdddf; border-radius: 3px; background: #f9f9f9; color: #727272; display: flex; align-items: center; justify-content: center; }

  aside { width: 56px; border-left: 1px solid #dadce0; display: flex; flex-direction: column; align-items: center; padding: 18px 0 23px; gap: 36px; }
  aside hr { width: 20px; height: 1px; margin: -2px 0 0; border: 0; background: #dadce0; }
  .add { margin-top: 2px; }
  .hide { margin-top: auto; }
  .cal { font: bold 8.5px Roboto, sans-serif; fill: #4285f4; }

  .float { position: absolute; left: 293px; top: 37px; width: 457px; height: 38px; border-radius: 4px; background: #fff; box-shadow: 0 2px 6px rgba(60, 64, 67, .25); display: flex; align-items: center; padding-left: 4px; color: #5f6368; }
  .dim { color: #bfc1c4; }
  .pic { width: 26px; }
  .float > svg { margin-top: 1px; }
  .sep.a { margin: 0 5px 0 9px; }
  .sel { width: 26px; height: 26px; border-radius: 2px; background: #e8f0fe; color: #1a73e8; }
  .sep.b { margin: 0 6px 0 4px; }
  .sep.c { margin: 0 6px 0 4px; }
  .float .n { margin-right: 4px; }
  .float .u { margin: 0 4px 0 6px; }
  .float .o { margin-left: 5px; }
  .sep.d { margin: 0 4px; }
  .shade { position: absolute; left: 0; top: 0; width: 14px; height: 1047px; background: linear-gradient(90deg, rgba(0, 0, 0, .17), transparent); }
</style>
